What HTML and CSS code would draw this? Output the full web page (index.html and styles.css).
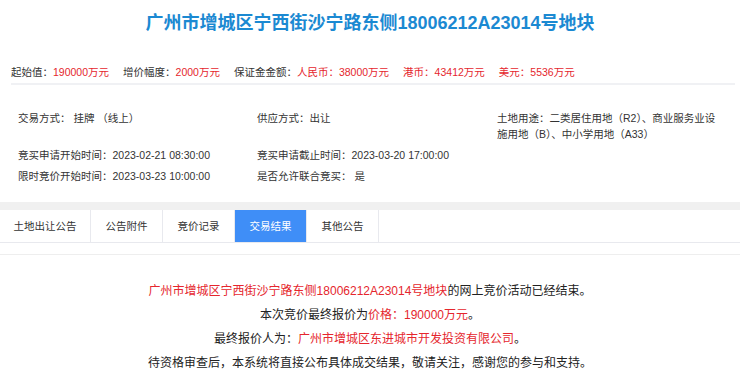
FILE: index.html
```html
<!DOCTYPE html>
<html lang="zh-CN">
<head>
    <meta charset="UTF-8">
    <title>广州市增城区宁西街沙宁路东侧18006212A23014号地块</title>
    <link rel="stylesheet" href="styles.css">
</head>
<body>
    <h1 class="title">广州市增城区宁西街沙宁路东侧18006212A23014号地块</h1>

    <div class="price-row">
        <span class="price-item">起始值：<em>190000万元</em></span>
        <span class="price-item">增价幅度：<em>2000万元</em></span>
        <span class="price-item">保证金金额：<em>人民币：38000万元</em></span>
        <span class="price-item"><em>港币：43412万元</em></span>
        <span class="price-item"><em>美元：5536万元</em></span>
    </div>

    <div class="info-grid">
        <div>交易方式： 挂牌 （线上）</div>
        <div>供应方式：出让</div>
        <div>土地用途：二类居住用地（R2）、商业服务业设施用地（B）、中小学用地（A33）</div>
        <div>竞买申请开始时间：2023-02-21 08:30:00</div>
        <div>竞买申请截止时间：2023-03-20 17:00:00</div>
        <div></div>
        <div>限时竞价开始时间：2023-03-23 10:00:00</div>
        <div>是否允许联合竞买： 是</div>
        <div></div>
    </div>

    <div class="tabs">
        <div class="tab tab-wide">土地出让公告</div>
        <div class="tab">公告附件</div>
        <div class="tab">竞价记录</div>
        <div class="tab active">交易结果</div>
        <div class="tab">其他公告</div>
    </div>

    <div class="result">
        <p><em>广州市增城区宁西街沙宁路东侧18006212A23014号地块</em>的网上竞价活动已经结束。</p>
        <p>本次竞价最终报价为<em>价格：190000万元</em>。</p>
        <p>最终报价人为：<em>广州市增城区东进城市开发投资有限公司</em>。</p>
        <p>待资格审查后，本系统将直接公布具体成交结果，敬请关注，感谢您的参与和支持。</p>
    </div>
</body>
</html>
```

FILE: styles.css
```css
body {
    font-family: "Liberation Sans", "Noto Sans CJK SC", sans-serif;
    background-color: #fff;
    color: #333;
    margin: 0;
    padding: 0;
}
em {
    font-style: normal;
    color: #e5262d;
}
.title {
    margin: 10px 0 0;
    font-size: 18px;
    line-height: 26px;
    font-weight: bold;
    text-align: center;
    color: #1b89d2;
}
.price-row {
    margin: 28px 5px 0 11px;
    padding-bottom: 3px;
    border-bottom: 2px solid #f0f1f4;
    font-size: 10.5px;
    line-height: 16px;
    display: flex;
    gap: 14px;
}
.info-grid {
    display: grid;
    grid-template-columns: 239px 240px 1fr;
    row-gap: 5px;
    padding: 25px 20px 18px 18px;
    font-size: 10.5px;
    line-height: 16px;
}
.tabs {
    display: flex;
    border-top: 8px solid #f0f0f0;
    border-bottom: 1px solid #e8e9ee;
}
.tab {
    width: 71px;
    height: 32px;
    line-height: 32px;
    text-align: center;
    font-size: 10.5px;
    border-right: 1px solid #e8e9ee;
}
.tab-wide {
    width: 90px;
}
.tab.active {
    background-color: #3f8ef7;
    color: #fff;
}
.result {
    margin-top: 11px;
    border-top: 1px solid #eeeeee;
    padding-top: 24px;
    text-align: center;
    font-size: 12px;
    line-height: 24px;
    color: #222;
}
.result p {
    margin: 0;
}
```
